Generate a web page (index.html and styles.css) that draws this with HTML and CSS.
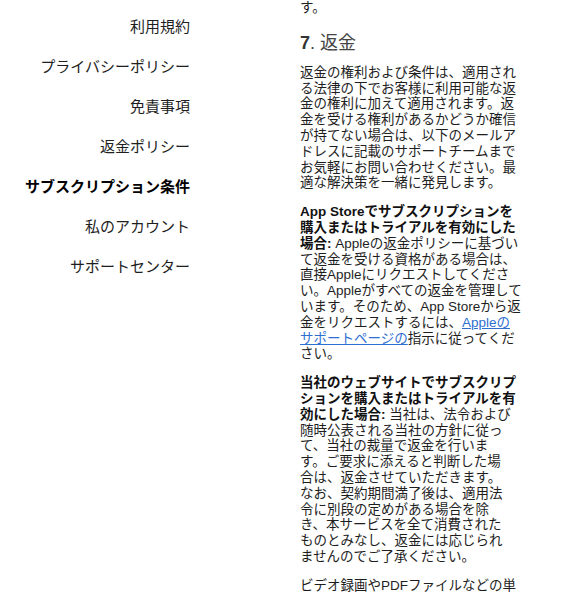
FILE: index.html
```html
<!DOCTYPE html>
<html lang="ja">
<head>
<meta charset="utf-8">
<title>サブスクリプション条件</title>
<link rel="stylesheet" href="styles.css">
</head>
<body>
<div class="page">
  <nav class="side-nav">
    <a class="nav-item" href="#">利用規約</a>
    <a class="nav-item" href="#">プライバシーポリシー</a>
    <a class="nav-item" href="#">免責事項</a>
    <a class="nav-item" href="#">返金ポリシー</a>
    <a class="nav-item active" href="#">サブスクリプション条件</a>
    <a class="nav-item" href="#">私のアカウント</a>
    <a class="nav-item" href="#">サポートセンター</a>
  </nav>
  <main class="content">
    <p class="para">す。</p>
    <h2 class="section-title"><span class="num">7</span>. 返金</h2>
    <p class="para">返金の権利および条件は、適用され<br>る法律の下でお客様に利用可能な返<br>金の権利に加えて適用されます。返<br>金を受ける権利があるかどうか確信<br>が持てない場合は、以下のメールア<br>ドレスに記載のサポートチームまで<br>お気軽にお問い合わせください。最<br>適な解決策を一緒に発見します。</p>
    <p class="para"><strong>App Storeでサブスクリプションを<br>購入またはトライアルを有効にした<br>場合:</strong> Appleの返金ポリシーに基づい<br>て返金を受ける資格がある場合は、<br>直接Appleにリクエストしてくださ<br>い。Appleがすべての返金を管理して<br>います。そのため、App Storeから返<br>金をリクエストするには、<a class="link" href="#">Appleの<br>サポートページの</a>指示に従ってくだ<br>さい。</p>
    <p class="para"><strong>当社のウェブサイトでサブスクリプ<br>ションを購入またはトライアルを有<br>効にした場合:</strong> 当社は、法令および<br>随時公表される当社の方針に従っ<br>て、当社の裁量で返金を行いま<br>す。ご要求に添えると判断した場<br>合は、返金させていただきます。<br>なお、契約期間満了後は、適用法<br>令に別段の定めがある場合を除<br>き、本サービスを全て消費された<br>ものとみなし、返金には応じられ<br>ませんのでご了承ください。</p>
    <p class="para">ビデオ録画やPDFファイルなどの単</p>
  </main>
</div>
</body>
</html>
```

FILE: styles.css
```css
html, body {
  margin: 0;
  padding: 0;
  background: #ffffff;
}

body {
  font-family: "Liberation Sans", "Noto Sans CJK JP", sans-serif;
  color: #222222;
}

.page {
  display: flex;
  align-items: flex-start;
  gap: 110px;
}

.side-nav {
  width: 190px;
  flex: none;
  display: flex;
  flex-direction: column;
  align-items: flex-end;
  gap: 20px;
  padding-top: 17px;
}

.nav-item {
  font-size: 15px;
  line-height: 20px;
  color: #1e1e1e;
  text-decoration: none;
  white-space: nowrap;
}

.nav-item.active {
  font-weight: bold;
  color: #000000;
}

.content {
  width: 240px;
  flex: none;
}

.para {
  margin: 0 0 13px;
  font-size: 13.5px;
  line-height: 15.8px;
  color: #1e1e1e;
  white-space: nowrap;
  text-spacing-trim: space-all;
}

.para strong {
  font-weight: bold;
  color: #111111;
}

.section-title {
  margin: 16px 0 11px;
  font-size: 18px;
  line-height: 22px;
  font-weight: normal;
  color: #444444;
}

.section-title .num {
  font-weight: bold;
  color: #333333;
}

.link {
  color: #2f6fd1;
  text-decoration: underline;
}
```
